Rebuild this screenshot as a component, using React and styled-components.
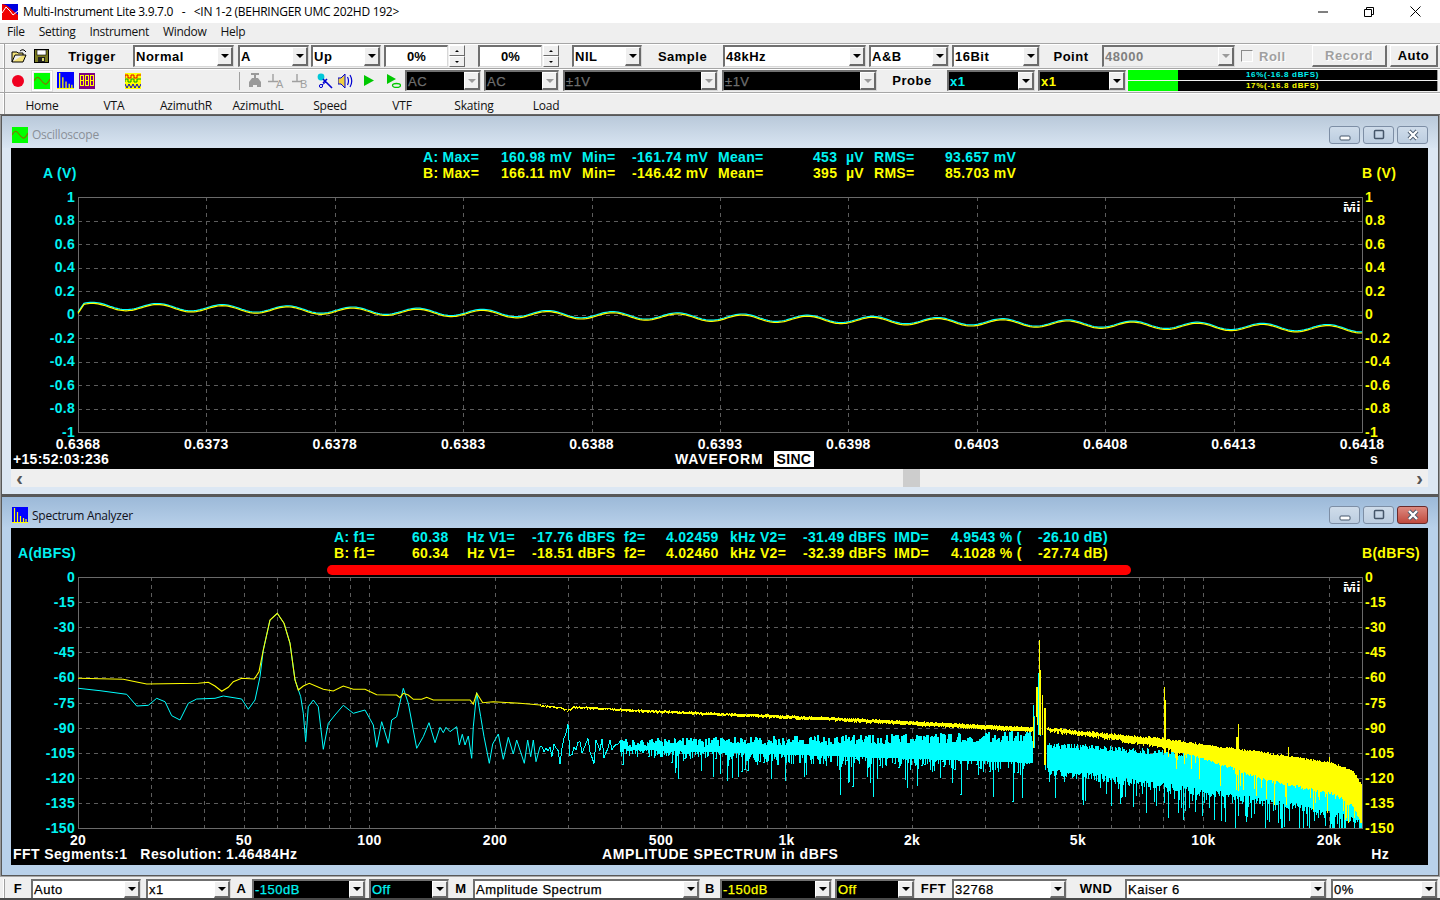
import React from "react";
import styled, { createGlobalStyle, css } from "styled-components";

const GlobalStyle = createGlobalStyle`
  html, body { margin: 0; padding: 0; background: #efefef; overflow: hidden; }
  body { font-family: "Liberation Sans", Arial, sans-serif; }
`;

const CYAN = "#00f2f2";
const YELLOW = "#ffff00";
const UI_FONT = `"Open Sans", "Noto Sans", sans-serif`;

// ---------- trace data ----------

const rng = (seed) => () => {
  seed = (seed + 0x6d2b79f5) | 0;
  let t = Math.imul(seed ^ (seed >>> 15), 1 | seed);
  t = (t + Math.imul(t ^ (t >>> 7), 61 | t)) ^ t;
  return ((t ^ (t >>> 14)) >>> 0) / 4294967296;
};

const interp = (knots, x) => {
  for (let i = 1; i < knots.length; i++) {
    if (x <= knots[i][0]) {
      const [x0, y0] = knots[i - 1];
      const [x1, y1] = knots[i];
      return y0 + ((y1 - y0) * (x - x0)) / (x1 - x0);
    }
  }
  return knots[knots.length - 1][1];
};

const scopeTrace = (offset) => {
  let d = "";
  for (let x = 78; x <= 1362; x += 2) {
    const base = 306.5 + (x - 93) * 0.018;
    let y = base - 3.4 * Math.cos(((x - 93) / 65) * 2 * Math.PI) + offset;
    if (x < 84) y += (84 - x) * 1.2;
    d += `${d ? "L" : "M"}${x} ${y.toFixed(1)}`;
  }
  return d;
};

// points read off the low end of the spectrum, as zoomed 3x from (60,600)
const fromZoom = (pts) =>
  pts.map(([x, y]) => `${(60 + x / 3).toFixed(1)} ${(600 + y / 3).toFixed(1)}`).join("L");

const yellowLow =
  "M78 678.3L" +
  fromZoom([
    [55, 235], [120, 236], [190, 238], [230, 246], [260, 252], [415, 250], [445, 247], [465, 258],
    [485, 274], [505, 262], [520, 245], [545, 235], [583, 237], [597, 215], [610, 150], [630, 60],
    [652, 40], [672, 70], [690, 130], [705, 240], [715, 270], [730, 258], [748, 250], [790, 268],
    [820, 273], [850, 258], [880, 268], [915, 268], [950, 284], [1010, 285], [1020, 293], [1030, 280],
    [1045, 285], [1060, 298], [1085, 298], [1100, 292], [1120, 300], [1180, 300], [1230, 300], [1240, 312],
    [1250, 280], [1268, 308], [1300, 305], [1380, 310], [1440, 315],
  ]);

const cyanLow =
  "M78 688.3L" +
  fromZoom([
    [55, 265], [120, 272], [200, 283], [230, 318], [265, 316], [290, 295], [315, 305], [335, 347],
    [360, 360], [385, 310], [410, 297], [465, 295], [490, 288], [545, 297], [565, 328], [585, 300],
    [600, 230], [610, 150], [630, 60], [652, 40], [672, 70], [690, 130], [705, 240], [722, 290],
    [730, 340], [737, 425], [745, 320], [760, 300], [775, 320], [790, 448], [805, 370], [825, 345],
    [850, 316], [880, 340], [915, 330], [940, 375], [950, 442], [965, 365], [985, 430], [995, 360],
    [1010, 350], [1030, 265], [1045, 310], [1070, 445], [1090, 410], [1107, 368], [1125, 428], [1140, 382],
    [1150, 398], [1158, 382], [1170, 395], [1190, 380], [1198, 435], [1207, 403], [1215, 435], [1225, 408],
    [1235, 475], [1240, 380], [1250, 278], [1262, 350], [1272, 410], [1288, 490], [1298, 432], [1315, 402],
    [1330, 478], [1345, 412], [1360, 462], [1370, 420], [1393, 490], [1403, 420], [1412, 470], [1420, 420],
    [1428, 485], [1440, 440],
  ]);

const buildCyanHigh = () => {
  const r = rng(42);
  let d = "M540 746";
  // sparse part is a line, further right the bins fill the pixels
  for (let x = 542; x < 620; x += 2) {
    const spike = r() < 0.12 ? r() * 18 : 0;
    const y = x > 564 && x < 570 ? 724 + r() * 12 : 748 + (r() - 0.5) * 22 + spike;
    d += `L${x} ${y.toFixed(1)}`;
  }
  let fill = "";
  for (let x = 620; x < 1033; x++) {
    const t = (x - 620) / 413;
    const up = 748 - r() * (9 + 8 * t);
    const spike = r() < 0.16 ? r() * (20 + 26 * t) : 0;
    const down = 748 + r() * (8 + 20 * t) + spike;
    d += `L${x} ${up.toFixed(1)}L${x} ${down.toFixed(1)}`;
    fill += `M${x} ${(748 - 7 * t).toFixed(1)}V${(749 + 14 * t).toFixed(1)}`;
  }
  d += fill;
  const manual = [[1033, 705, 748], [1034, 716, 748], [1038, 673, 735], [1039, 673, 735], [1040, 690, 736], [1042, 705, 735], [1045, 730, 770]];
  manual.forEach(([x, a, b]) => { d += `M${x} ${a}V${b}`; });
  const topK = [[1047, 742], [1100, 745], [1200, 752], [1330, 770], [1362, 800]];
  const botK = [[1047, 776], [1100, 782], [1200, 796], [1330, 816], [1362, 828]];
  for (let x = 1047; x <= 1361; x++) {
    const spike = r() < 0.3 ? r() * 30 : 0;
    const bottom = Math.min(828, interp(botK, x) - r() * 8 + spike);
    d += `M${x} ${(interp(topK, x) + r() * 6).toFixed(1)}V${bottom.toFixed(1)}`;
  }
  return d;
};

const buildYellowHigh = () => {
  const r = rng(7);
  const midK = [[540, 705], [560, 707], [567, 710], [574, 706], [621, 709], [723, 713], [824, 717], [925, 722], [1026, 727], [1033, 727]];
  let d = "";
  for (let x = 540; x < 1033; x++) {
    const th = 1 + ((x - 540) / 493) * 3;
    const y = interp(midK, x) + (r() - 0.5) * 1.2;
    d += `M${x} ${y.toFixed(1)}v${(th + r()).toFixed(1)}`;
  }
  const manual = [[1033, 717, 748], [1036, 687, 717], [1037, 687, 725], [1039, 640, 735], [1040, 670, 735], [1042, 695, 735], [1044, 708, 765], [1045, 708, 765], [1164, 687, 753], [1165, 700, 753], [1238, 724, 777], [1237, 737, 770], [1236, 737, 775], [1288, 747, 760], [1329, 757, 770]];
  manual.forEach(([x, a, b]) => { d += `M${x} ${a}V${b}`; });
  const topK = [[1047, 727], [1100, 732], [1160, 737], [1200, 743], [1267, 752], [1333, 762], [1353, 770], [1362, 785]];
  const botK = [[1047, 733], [1100, 739], [1160, 749], [1200, 759], [1267, 782], [1333, 795], [1353, 808], [1362, 828]];
  for (let x = 1047; x <= 1361; x++) {
    const spike = r() < 0.16 && x > 1160 ? r() * 24 : 0;
    const bottom = Math.min(828, interp(botK, x) - r() * 3 + spike);
    d += `M${x} ${(interp(topK, x) + r() * 2).toFixed(1)}V${bottom.toFixed(1)}`;
  }
  return d;
};

const freqX = (f) => 78 + 417 * Math.log10(f / 20);
const freqGrid = [30, 40, 50, 60, 70, 80, 90, 100, 200, 300, 400, 500, 600, 700, 800, 900, 1000, 2000, 3000, 4000, 5000, 6000, 7000, 8000, 9000, 10000, 20000];
const freqLabels = [["20", 20], ["50", 50], ["100", 100], ["200", 200], ["500", 500], ["1k", 1000], ["2k", 2000], ["5k", 5000], ["10k", 10000], ["20k", 20000]];
const timeLabels = ["0.6368", "0.6373", "0.6378", "0.6383", "0.6388", "0.6393", "0.6398", "0.6403", "0.6408", "0.6413", "0.6418"];
const voltLabels = ["1", "0.8", "0.6", "0.4", "0.2", "0", "-0.2", "-0.4", "-0.6", "-0.8", "-1"];
const dbLabels = ["0", "-15", "-30", "-45", "-60", "-75", "-90", "-105", "-120", "-135", "-150"];

// ---------- page parts ----------

const place = css`
  flex-shrink: 0;
  margin-left: ${(p) => p.$ml || 0}px;
  ${(p) => p.$w && `width: ${p.$w}px;`}
`;

const Page = styled.div`
  width: 1440px;
  height: 900px;
  display: flex;
  flex-direction: column;
  overflow: hidden;
  background: #efefef;
`;

const TitleBar = styled.div`
  height: 23px;
  background: #fff;
  display: flex;
  align-items: center;
  padding-left: 2px;
  font: 12px ${UI_FONT};
  color: #000;
  white-space: pre;
  flex-shrink: 0;
`;

const TitleText = styled.span`
  margin-left: 5px;
  letter-spacing: -0.28px;
  flex: 1;
`;

const CaptionBtn = styled.div`
  width: 46px;
  height: 23px;
  display: flex;
  align-items: center;
  justify-content: center;
`;

const CaptionGroup = styled.div`
  display: flex;
  padding-right: 2px;
`;

const MenuBar = styled.div`
  height: 20px;
  box-sizing: border-box;
  padding: 0 0 3px 7px;
  display: flex;
  align-items: center;
  gap: 14px;
  font: 12px ${UI_FONT};
  letter-spacing: -0.3px;
  color: #111;
  flex-shrink: 0;
`;

const ToolRow = styled.div`
  height: ${(p) => p.$h}px;
  box-sizing: border-box;
  display: flex;
  align-items: center;
  border-top: 1px solid #a6a6a6;
  box-shadow: inset 0 1px 0 #fff;
  flex-shrink: 0;
`;

const Grip = styled.div`
  box-sizing: border-box;
  flex-shrink: 0;
  width: 2px;
  height: 100%;
  margin-left: 3px;
  background: #fff;
  border-right: 1px solid #a0a0a0;
`;

const Label = styled.div`
  ${place}
  text-align: center;
  font: bold 13px "Liberation Sans", sans-serif;
  letter-spacing: 0.5px;
  color: #000;
`;

const BarLabel = styled(Label)`
  line-height: 20px;
`;

const Combo = styled.div`
  ${place}
  height: ${(p) => p.$h || 22}px;
  box-sizing: border-box;
  display: flex;
  border-style: solid;
  border-width: 2px 1px 1px 2px;
  border-color: #707070 #d8d8d8 #d8d8d8 #707070;
  background: ${(p) => (p.$dark ? "#000" : p.$off ? "#efefef" : "#fff")};
`;

const ComboText = styled.div`
  flex: 1;
  overflow: hidden;
  white-space: pre;
  padding-left: 1px;
  font: ${(p) => (p.$thin ? "normal" : "bold")} 13px "Liberation Sans", sans-serif;
  ${(p) => p.$thin && "-webkit-text-stroke: 0.25px;"}
  letter-spacing: 0.5px;
  display: flex;
  align-items: center;
  color: ${(p) => p.$color || "#000"};
`;

const ArrowBtn = styled.div`
  width: 16px;
  box-sizing: border-box;
  background: #efefef;
  border-style: solid;
  border-width: 1px 2px 2px 1px;
  border-color: #fff #6a6a6a #6a6a6a #fff;
  display: flex;
  align-items: center;
  justify-content: center;
  &::after {
    content: "";
    border-left: 4px solid transparent;
    border-right: 4px solid transparent;
    border-top: 4px solid ${(p) => (p.$off ? "#9a9a9a" : "#000")};
  }
`;

const EditBox = styled(Combo)`
  justify-content: center;
  align-items: center;
  font: bold 13px "Liberation Sans", sans-serif;
`;

const Spinner = styled.div`
  ${place}
  height: 22px;
  display: flex;
  flex-direction: column;
`;

const SpinPart = styled.div`
  flex: 1;
  box-sizing: border-box;
  background: #efefef;
  border-style: solid;
  border-width: 1px;
  border-color: #fff #6a6a6a #6a6a6a #fff;
  display: flex;
  align-items: center;
  justify-content: center;
  &::after {
    content: "";
    border-left: 2px solid transparent;
    border-right: 2px solid transparent;
    ${(p) => (p.$up ? "border-bottom: 2px solid #000;" : "border-top: 2px solid #000;")}
  }
`;

const RollBox = styled.div`
  ${place}
  display: flex;
  align-items: center;
  gap: 6px;
  font: bold 13px "Liberation Sans", sans-serif;
  letter-spacing: 0.5px;
  color: #a0a0a0;
  text-shadow: 1px 1px 0 #fff;
`;

const CheckBox = styled.div`
  width: 12px;
  height: 12px;
  box-sizing: border-box;
  background: #efefef;
  border-style: solid;
  border-width: 1px;
  border-color: #8a8a8a #fff #fff #8a8a8a;
`;

const RaisedBtn = styled.div`
  ${place}
  height: 22px;
  box-sizing: border-box;
  background: #efefef;
  border-style: solid;
  border-width: 1px 2px 2px 1px;
  border-color: #fff #707070 #707070 #fff;
  display: flex;
  align-items: center;
  justify-content: center;
  font: bold 13px "Liberation Sans", sans-serif;
  letter-spacing: 0.5px;
  color: ${(p) => (p.$off ? "#a0a0a0" : "#000")};
  ${(p) => p.$off && "text-shadow: 1px 1px 0 #fff;"}
`;

const IconSlot = styled.div`
  ${place}
  height: 18px;
  display: flex;
  align-items: center;
  justify-content: center;
  ${(p) =>
    p.$pressed &&
    `outline: 1px solid #fff; box-shadow: 0 0 0 2px #dcdcdc;`}
`;

const Separator = styled.div`
  ${place}
  width: 1px;
  height: 18px;
  background: #a0a0a0;
`;

const MeterStack = styled.div`
  ${place}
  display: flex;
  flex-direction: column;
  gap: 1px;
`;

const MeterBar = styled.div`
  height: 10px;
  background: #000;
  position: relative;
  border-right: 1px solid #999;
`;

const MeterFill = styled.div`
  height: 100%;
  background: #00ff00;
`;

const MeterText = styled.div`
  position: absolute;
  left: 0;
  right: 0;
  top: 0;
  text-align: center;
  font: bold 8px/10px "Liberation Sans", sans-serif;
  letter-spacing: 0.7px;
  color: ${(p) => p.$color};
`;

const TabRow = styled(ToolRow)`
  border-bottom: 1px solid #666;
`;

const Tab = styled.div`
  width: 72px;
  padding-top: 4px;
  margin-left: ${(p) => p.$ml || 0}px;
  text-align: center;
  font: 12px ${UI_FONT};
  letter-spacing: -0.2px;
  color: #111;
`;

const MdiArea = styled.div`
  height: 761px;
  flex-shrink: 0;
  box-sizing: border-box;
  padding: 1px 2px 1px;
  background: #585858;
  display: flex;
  flex-direction: column;
  gap: 3px;
  border-left: 1px solid #9a9a9a;
  border-right: 1px solid #9a9a9a;
`;

const Win = styled.section`
  height: 378px;
  flex-shrink: 0;
  display: flex;
  flex-direction: column;
  box-sizing: border-box;
  margin-left: -1px;
  margin-right: -1px;
  padding: 0 10px 0 9px;
  background: ${(p) => (p.$active ? "#b9d1ea" : "#dce7f3")};
  border-radius: 3px 3px 0 0;
`;

const WinTitle = styled.header`
  height: ${(p) => p.$h}px;
  box-sizing: border-box;
  margin: 0 -10px 0 -9px;
  padding: 5px 10px 0 10px;
  display: flex;
  align-items: center;
  flex-shrink: 0;
  background: ${(p) =>
    p.$active ? "linear-gradient(#9cb9d8, #b9d1ea)" : "linear-gradient(#b9c9da, #d9e5f2)"};
`;

const WinName = styled.span`
  margin-left: 4px;
  flex: 1;
  font: 12px ${UI_FONT};
  letter-spacing: -0.25px;
  color: ${(p) => (p.$active ? "#10101a" : "#8a9098")};
`;

const WinButtons = styled.div`
  display: flex;
  gap: 3px;
`;

const WinButton = styled.div`
  width: 31px;
  height: 18px;
  box-sizing: border-box;
  border: 1px solid ${(p) => (p.$close ? "#6b2a2a" : "#7d8ea5")};
  border-radius: 3px;
  background: ${(p) =>
    p.$close ? "linear-gradient(#dd8a80, #c04a3e)" : "linear-gradient(#cfdcea, #bccde0)"};
  display: flex;
  align-items: center;
  justify-content: center;
`;

const Client = styled.div`
  height: ${(p) => p.$h}px;
  flex-shrink: 0;
  background: #000;
  display: flex;
  flex-direction: column;
  position: relative;
  font: bold 14px "Liberation Sans", sans-serif;
  letter-spacing: 0.3px;
`;

const PlotHead = styled.div`
  display: grid;
  grid-template-columns: ${(p) => p.$cols};
  padding-top: 1px;
  height: 32px;
  flex-shrink: 0;
`;

const AxisName = styled.div`
  align-self: end;
  line-height: 16px;
  padding-left: ${(p) => p.$pad || 0}px;
  color: ${(p) => p.$color};
`;

const Readout = styled.div`
  display: grid;
  grid-template-columns: ${(p) => p.$cols};
  grid-auto-rows: 16px;
  line-height: 16px;
  white-space: pre;
`;

const Cell = styled.span`
  color: ${(p) => p.$color};
`;

const PlotSvg = styled.svg`
  display: block;
  flex-shrink: 0;
  margin-bottom: ${(p) => p.$overlap || 0}px;
`;

const PlotFoot = styled.div`
  flex: 1;
  display: grid;
  grid-template-columns: ${(p) => p.$cols};
  color: #fff;
  line-height: 16px;
  white-space: pre;
  padding-left: 2px;
`;

const WideCaption = styled.span`
  letter-spacing: ${(p) => p.$gap}px;
`;

const SincTag = styled.span`
  background: #fff;
  color: #000;
  letter-spacing: 0.3px;
  padding: 0 3px;
  margin-left: 10px;
`;

const FootUnit = styled.span`
  padding-right: ${(p) => p.$pad}px;
`;

const ScrollBar = styled.div`
  height: 18px;
  flex-shrink: 0;
  background: #efefef;
  display: flex;
  align-items: center;
  justify-content: space-between;
`;

const ScrollArrow = styled.div`
  width: 17px;
  text-align: center;
  font: bold 20px/16px "Liberation Sans", sans-serif;
  color: #555;
`;

const ScrollTrack = styled.div`
  flex: 1;
  height: 18px;
  padding-left: 875px;
`;

const ScrollThumb = styled.div`
  width: 17px;
  height: 18px;
  background: #cdcdcd;
`;

const RedMark = styled.div`
  position: absolute;
  left: 316px;
  top: 37px;
  width: 804px;
  height: 10px;
  border-radius: 5px;
  background: #ff0000;
`;

const BottomBar = styled.div`
  height: 24px;
  box-sizing: border-box;
  display: flex;
  align-items: flex-start;
  padding-top: 2px;
  border-top: 1px solid #a6a6a6;
  border-bottom: 2px solid #4a4a4a;
  flex-shrink: 0;
  overflow: hidden;
`;

// ---------- icons ----------

const AppIcon = () => (
  <svg width="16" height="16" viewBox="0 0 16 16">
    <rect width="16" height="16" fill="#f00000" />
    <path d="M0 0H16V11L8 4 4 1Z" fill="#0000e0" />
    <path d="M0 9L4 3 8 7 11 11 16 7" fill="none" stroke="#fff" strokeWidth="1" />
  </svg>
);

const FolderIcon = () => (
  <svg width="16" height="14" viewBox="0 0 16 14">
    <path d="M1 13V3H6L7 4H12V6H4L1 13H12L15 6H12" fill="#f4e27a" stroke="#000" strokeWidth="1" />
    <path d="M9 2Q11 0 13 1L15 3" fill="none" stroke="#000" />
  </svg>
);

const SaveIcon = () => (
  <svg width="15" height="14" viewBox="0 0 15 14">
    <rect x="0.5" y="0.5" width="14" height="13" fill="#7a7a20" stroke="#000" />
    <rect x="3" y="1" width="9" height="5" fill="#fff" stroke="#000" strokeWidth=".6" />
    <rect x="4" y="8" width="7" height="5" fill="#222" />
    <rect x="8" y="9" width="2" height="3" fill="#d8d870" />
  </svg>
);

const RecordIcon = () => (
  <svg width="12" height="12" viewBox="0 0 12 12">
    <circle cx="6" cy="6" r="6" fill="#f00020" />
  </svg>
);

const ScopeIcon = ({ size = 16 }) => (
  <svg width={size} height={size} viewBox="0 0 16 16">
    <rect width="16" height="16" fill="#00ff00" />
    <path d="M0 8Q3 2 6 6T11 11Q13 12 16 6" fill="none" stroke="#7a7a00" strokeWidth="1.2" />
  </svg>
);

const SpectrumIcon = ({ size = 16 }) => (
  <svg width={size} height={size} viewBox="0 0 16 16">
    <rect width="16" height="16" fill="#0000ff" />
    <path d="M2.5 15V1M5.5 15V5M8.5 15V9M11.5 15V11M14 15V12" stroke="#ffff00" strokeWidth="1.2" />
    <path d="M0 15.5H16" stroke="#ffff00" />
  </svg>
);

const MeterIcon = () => (
  <svg width="16" height="16" viewBox="0 0 16 16">
    <rect width="16" height="16" fill="#800080" />
    <g fill="none" stroke="#ffff00" strokeWidth="1">
      <rect x="1.5" y="2.5" width="3" height="5" />
      <rect x="1.5" y="7.5" width="3" height="5" />
      <rect x="6.5" y="2.5" width="3" height="5" />
      <rect x="6.5" y="7.5" width="3" height="5" />
      <rect x="11.5" y="2.5" width="3" height="5" />
      <rect x="11.5" y="7.5" width="3" height="5" />
    </g>
  </svg>
);

const LogicIcon = () => (
  <svg width="16" height="16" viewBox="0 0 16 16">
    <rect width="16" height="16" fill="#ffff00" />
    <path d="M0 5V2H3V5H6V2H9V5H12V2H16" fill="none" stroke="#e00000" />
    <path d="M0 9V6H3V9H6V6H9V9H12V6H16" fill="none" stroke="#00a000" />
    <path d="M0 11L2 15 4 11 6 15 8 11 10 15 12 11 14 15 16 11" fill="none" stroke="#0000d0" />
  </svg>
);

const TonearmIcon = () => (
  <svg width="14" height="16" viewBox="0 0 14 16">
    <path d="M3 1H11M7 1V5" stroke="#9a9a9a" strokeWidth="2" fill="none" />
    <path d="M1 14V9L4 5H10L13 9V14H9V12H5V14Z" fill="#9a9a9a" />
  </svg>
);

const GroundIcon = ({ letter }) => (
  <svg width="17" height="16" viewBox="0 0 17 16">
    <path d="M0 8.5H10M5 1V8" stroke="#a0a0a0" strokeWidth="1.4" fill="none" />
    <text x="8" y="15" fontSize="11" fontFamily="Liberation Sans" fill="#a0a0a0">{letter}</text>
  </svg>
);

const MicIcon = () => (
  <svg width="16" height="16" viewBox="0 0 16 16">
    <circle cx="4" cy="4" r="3.4" fill="#00c8d8" />
    <path d="M6 6L15 15M10 6L6 10" stroke="#0000d0" strokeWidth="1.6" />
    <circle cx="4" cy="13" r="1.6" fill="none" stroke="#0000d0" />
    <path d="M5 12L9 9" stroke="#0000d0" />
  </svg>
);

const SpeakerIcon = () => (
  <svg width="16" height="16" viewBox="0 0 16 16">
    <path d="M0 5H3L7 1V15L3 11H0Z" fill="#f0d040" stroke="#0000d0" />
    <path d="M9.5 4Q11.5 8 9.5 12M12 2Q15.5 8 12 14" fill="none" stroke="#0000d0" strokeWidth="1.2" />
  </svg>
);

const PlayIcon = () => (
  <svg width="12" height="11" viewBox="0 0 12 11">
    <path d="M1 0L11 5.5 1 11Z" fill="#00c800" />
  </svg>
);

const PlayOnceIcon = () => (
  <svg width="14" height="14" viewBox="0 0 14 14">
    <path d="M0 0L9 5 0 10Z" fill="#00c800" />
    <ellipse cx="9.5" cy="11.5" rx="4" ry="2" fill="none" stroke="#00c800" strokeWidth="1.3" />
  </svg>
);

const MinIcon = () => (
  <svg width="10" height="10" viewBox="0 0 10 10"><path d="M0 5H10" stroke="#000" /></svg>
);
const RestoreIcon = () => (
  <svg width="10" height="10" viewBox="0 0 10 10">
    <path d="M0.5 2.5H7.5V9.5H0.5ZM2.5 2.5V0.5H9.5V7.5H7.5" fill="none" stroke="#000" />
  </svg>
);
const CloseIcon = () => (
  <svg width="11" height="11" viewBox="0 0 11 11"><path d="M0.5 0.5L10.5 10.5M10.5 0.5L0.5 10.5" stroke="#000" /></svg>
);

const WinGlyph = ({ kind }) => (
  <svg width="14" height="12" viewBox="0 0 14 12">
    {kind === "min" && <rect x="2" y="7" width="10" height="4" rx="1" fill="#fff" stroke="#45566a" />}
    {kind === "max" && <rect x="2.5" y="1.5" width="9" height="8" rx="1" fill="none" stroke="#45566a" strokeWidth="1.5" />}
    {kind === "close" && (
      <>
        <path d="M3 2L11 10M11 2L3 10" stroke="#45566a" strokeWidth="4" />
        <path d="M3 2L11 10M11 2L3 10" stroke="#fff" strokeWidth="2.4" />
      </>
    )}
  </svg>
);

const MiLogo = ({ y }) => (
  <g>
    <text x="1343" y={y + 12} fontSize="14" fontWeight="bold" fill="#fff" textLength="18" lengthAdjust="spacingAndGlyphs">
      Mi
    </text>
    <path d={`M1342 ${y + 3.5}H1362M1342 ${y + 6.5}H1362`} stroke="#000" strokeWidth="1" />
  </g>
);

// ---------- plots ----------

const GridFrame = ({ left, right, top, bottom, xs, ys }) => (
  <g shapeRendering="crispEdges">
    <g stroke="#5c5c5c" strokeDasharray="4 4" fill="none">
      {xs.map((x) => <path key={x} d={`M${Math.round(x)} ${top}V${bottom}`} />)}
      {ys.map((y) => <path key={y} d={`M${left} ${Math.round(y)}H${right}`} />)}
    </g>
    <rect x={left} y={top} width={right - left} height={bottom - top} fill="none" stroke="#6a6a6a" />
  </g>
);

const ScopePlot = () => {
  const xs = timeLabels.map((_, i) => 78 + i * 128.4);
  const ys = voltLabels.map((_, i) => 197 + i * 23.5);
  return (
    <PlotSvg width="1417" height="270" viewBox="11 181 1417 270">
      <GridFrame left={78} right={1362} top={197} bottom={432} xs={xs.slice(1, -1)} ys={ys.slice(1, -1)} />
      <path d={scopeTrace(-0.8)} fill="none" stroke="#00ffff" strokeWidth="1.2" />
      <path d={scopeTrace(0.3)} fill="none" stroke={YELLOW} strokeWidth="1.2" />
      <MiLogo y={200} />
      {voltLabels.map((t, i) => (
        <g key={t}>
          <text x="75" y={ys[i] + 4.5} textAnchor="end" fill={CYAN}>{t}</text>
          <text x="1365" y={ys[i] + 4.5} fill={YELLOW}>{t}</text>
        </g>
      ))}
      {timeLabels.map((t, i) => (
        <text key={t} x={xs[i]} y="449" textAnchor="middle" fill="#fff">{t}</text>
      ))}
    </PlotSvg>
  );
};

const SpectrumPlot = () => {
  const ys = dbLabels.map((_, i) => 577 + i * 25.1);
  return (
    <PlotSvg width="1417" height="289" viewBox="11 561 1417 289" $overlap={-4}>
      <GridFrame left={78} right={1362} top={577} bottom={828} xs={freqGrid.map(freqX)} ys={ys.slice(1, -1)} />
      <path d={cyanLow} fill="none" stroke="#00ffff" strokeWidth="1" />
      <path d={buildCyanHigh()} fill="none" stroke="#00ffff" strokeWidth="1" shapeRendering="crispEdges" />
      <path d={yellowLow} fill="none" stroke={YELLOW} strokeWidth="1.1" />
      <path d={buildYellowHigh()} fill="none" stroke={YELLOW} strokeWidth="1" shapeRendering="crispEdges" />
      <MiLogo y={580} />
      {dbLabels.map((t, i) => (
        <g key={t}>
          <text x="75" y={ys[i] + 5} textAnchor="end" fill={CYAN}>{t}</text>
          <text x="1365" y={ys[i] + 5} fill={YELLOW}>{t}</text>
        </g>
      ))}
      {freqLabels.map(([t, f]) => (
        <text key={t} x={freqX(f)} y="845" textAnchor="middle" fill="#fff">{t}</text>
      ))}
    </PlotSvg>
  );
};

const scopeCols = "78px 81px 50px 86px 95px 33px 28px 71px auto";
const scopeRows = [
  { color: CYAN, cells: ["A: Max=", "160.98 mV", "Min=", "-161.74 mV", "Mean=", "453", "µV", "RMS=", "93.657 mV"] },
  { color: YELLOW, cells: ["B: Max=", "166.11 mV", "Min=", "-146.42 mV", "Mean=", "395", "µV", "RMS=", "85.703 mV"] },
];

const spectrumCols = "78px 55px 65px 92px 42px 64px 73px 91px 57px 87px auto";
const spectrumRows = [
  { color: CYAN, cells: ["A: f1=", "60.38", "Hz V1=", "-17.76 dBFS", "f2=", "4.02459", "kHz V2=", "-31.49 dBFS", "IMD=", "4.9543 % (", "-26.10 dB)"] },
  { color: YELLOW, cells: ["B: f1=", "60.34", "Hz V1=", "-18.51 dBFS", "f2=", "4.02460", "kHz V2=", "-32.39 dBFS", "IMD=", "4.1028 % (", "-27.74 dB)"] },
];

const ReadoutTable = ({ cols, rows }) => (
  <Readout $cols={cols}>
    {rows.map((row) =>
      row.cells.map((c, i) => (
        <Cell key={`${row.color}${i}`} $color={row.color}>{c}</Cell>
      ))
    )}
  </Readout>
);

const Drop = ({ w, ml, h, dark, off, arrowOff, thin, color, children }) => (
  <Combo $w={w} $ml={ml} $h={h} $dark={dark} $off={off}>
    <ComboText $color={color} $thin={thin}>{children}</ComboText>
    <ArrowBtn $off={off || arrowOff} />
  </Combo>
);

const Spin = ({ ml }) => (
  <Spinner $w={16} $ml={ml}>
    <SpinPart $up />
    <SpinPart />
  </Spinner>
);

const WinControls = ({ active }) => (
  <WinButtons>
    <WinButton><WinGlyph kind="min" /></WinButton>
    <WinButton><WinGlyph kind="max" /></WinButton>
    <WinButton $close={active}><WinGlyph kind="close" /></WinButton>
  </WinButtons>
);

const menus = ["File", "Setting", "Instrument", "Window", "Help"];
const tabs = ["Home", "VTA", "AzimuthR", "AzimuthL", "Speed", "VTF", "Skating", "Load"];

export default function App() {
  return (
    <Page>
      <GlobalStyle />
      <TitleBar>
        <AppIcon />
        <TitleText>{"Multi-Instrument Lite 3.9.7.0   -   <IN 1-2 (BEHRINGER UMC 202HD 192>"}</TitleText>
        <CaptionGroup>
          <CaptionBtn><MinIcon /></CaptionBtn>
          <CaptionBtn><RestoreIcon /></CaptionBtn>
          <CaptionBtn><CloseIcon /></CaptionBtn>
        </CaptionGroup>
      </TitleBar>

      <MenuBar>
        {menus.map((m) => <span key={m}>{m}</span>)}
      </MenuBar>

      <ToolRow $h={25}>
        <Grip />
        <IconSlot $ml={6} $w={16}><FolderIcon /></IconSlot>
        <IconSlot $ml={7} $w={15}><SaveIcon /></IconSlot>
        <Label $ml={10} $w={66}>Trigger</Label>
        <Drop ml={8} w={101}>Normal</Drop>
        <Drop ml={4} w={71}>A</Drop>
        <Drop ml={2} w={70}>Up</Drop>
        <EditBox $ml={3} $w={64}>0%</EditBox>
        <Spin ml={1} />
        <EditBox $ml={13} $w={64}>0%</EditBox>
        <Spin ml={1} />
        <Drop ml={13} w={70}>NIL</Drop>
        <Label $w={81}>Sample</Label>
        <Drop w={143}>48kHz</Drop>
        <Drop ml={3} w={80}>A&amp;B</Drop>
        <Drop ml={3} w={88}>16Bit</Drop>
        <Label $w={62}>Point</Label>
        <Drop w={133} off color="#808080">48000</Drop>
        <RollBox $ml={6} $w={71}><CheckBox />Roll</RollBox>
        <RaisedBtn $w={75} $off>Record</RaisedBtn>
        <RaisedBtn $ml={3} $w={48}>Auto</RaisedBtn>
      </ToolRow>

      <ToolRow $h={24}>
        <Grip />
        <IconSlot $ml={7} $w={12}><RecordIcon /></IconSlot>
        <IconSlot $ml={9} $w={18} $pressed><ScopeIcon /></IconSlot>
        <IconSlot $ml={6} $w={17}><SpectrumIcon size={17} /></IconSlot>
        <IconSlot $ml={5} $w={16}><MeterIcon /></IconSlot>
        <IconSlot $ml={30} $w={16}><LogicIcon /></IconSlot>
        <Separator $ml={98} />
        <IconSlot $ml={7} $w={16}><TonearmIcon /></IconSlot>
        <IconSlot $ml={5} $w={17}><GroundIcon letter="A" /></IconSlot>
        <IconSlot $ml={7} $w={17}><GroundIcon letter="B" /></IconSlot>
        <IconSlot $ml={8} $w={16}><MicIcon /></IconSlot>
        <IconSlot $ml={5} $w={16}><SpeakerIcon /></IconSlot>
        <IconSlot $ml={9} $w={12}><PlayIcon /></IconSlot>
        <IconSlot $ml={12} $w={14}><PlayOnceIcon /></IconSlot>
        <Drop ml={4} w={76} h={21} dark arrowOff thin color="#6e6e6e">AC</Drop>
        <Drop ml={3} w={75} h={21} dark arrowOff thin color="#6e6e6e">AC</Drop>
        <Drop ml={4} w={155} h={21} dark arrowOff thin color="#6e6e6e">±1V</Drop>
        <Drop ml={4} w={155} h={21} dark arrowOff thin color="#6e6e6e">±1V</Drop>
        <Label $w={70}>Probe</Label>
        <Drop w={88} h={21} dark color={CYAN}>x1</Drop>
        <Drop ml={3} w={88} h={21} dark color={YELLOW}>x1</Drop>
        <MeterStack $ml={2} $w={310}>
          <MeterBar>
            <MeterFill style={{ width: 50 }} />
            <MeterText $color={CYAN}>16%(-16.8 dBFS)</MeterText>
          </MeterBar>
          <MeterBar>
            <MeterFill style={{ width: 50 }} />
            <MeterText $color={YELLOW}>17%(-16.8 dBFS)</MeterText>
          </MeterBar>
        </MeterStack>
      </ToolRow>

      <TabRow $h={23}>
        <Grip />
        {tabs.map((t, i) => <Tab key={t} $ml={i === 0 ? 1 : 0}>{t}</Tab>)}
      </TabRow>

      <MdiArea>
        <Win>
          <WinTitle $h={32}>
            <ScopeIcon />
            <WinName>Oscilloscope</WinName>
            <WinControls />
          </WinTitle>
          <Client $h={321}>
            <PlotHead $cols="412px 939px auto">
              <AxisName $pad={32} $color={CYAN}>A (V)</AxisName>
              <ReadoutTable cols={scopeCols} rows={scopeRows} />
              <AxisName $color={YELLOW}>B (V)</AxisName>
            </PlotHead>
            <ScopePlot />
            <PlotFoot $cols="662px auto 1fr auto">
              <span>+15:52:03:236</span>
              <span><WideCaption $gap={0.9}>WAVEFORM</WideCaption><SincTag>SINC</SincTag></span>
              <span />
              <FootUnit $pad={50}>s</FootUnit>
            </PlotFoot>
          </Client>
          <ScrollBar>
            <ScrollArrow>‹</ScrollArrow>
            <ScrollTrack><ScrollThumb /></ScrollTrack>
            <ScrollArrow>›</ScrollArrow>
          </ScrollBar>
        </Win>

        <Win $active>
          <WinTitle $h={31} $active>
            <SpectrumIcon />
            <WinName $active>Spectrum Analyzer</WinName>
            <WinControls active />
          </WinTitle>
          <Client $h={337}>
            <PlotHead $cols="323px 1028px auto">
              <AxisName $pad={7} $color={CYAN}>A(dBFS)</AxisName>
              <ReadoutTable cols={spectrumCols} rows={spectrumRows} />
              <AxisName $color={YELLOW}>B(dBFS)</AxisName>
            </PlotHead>
            <SpectrumPlot />
            <PlotFoot $cols="589px auto 1fr auto">
              <WideCaption $gap={0.4}>{"FFT Segments:1   Resolution: 1.46484Hz"}</WideCaption>
              <WideCaption $gap={0.6}>AMPLITUDE SPECTRUM in dBFS</WideCaption>
              <span />
              <FootUnit $pad={39}>Hz</FootUnit>
            </PlotFoot>
            <RedMark />
          </Client>
        </Win>
      </MdiArea>

      <BottomBar>
        <Grip />
        <BarLabel $w={26}>F</BarLabel>
        <Drop w={110} h={20} thin>Auto</Drop>
        <Drop ml={5} w={85} h={20} thin>x1</Drop>
        <BarLabel $w={21}>A</BarLabel>
        <Drop w={114} h={20} dark thin color={CYAN}>-150dB</Drop>
        <Drop ml={3} w={80} h={20} dark thin color={CYAN}>Off</Drop>
        <BarLabel $w={24}>M</BarLabel>
        <Drop w={227} h={20} thin>Amplitude Spectrum</Drop>
        <BarLabel $w={20}>B</BarLabel>
        <Drop w={112} h={20} dark thin color={YELLOW}>-150dB</Drop>
        <Drop ml={3} w={80} h={20} dark thin color={YELLOW}>Off</Drop>
        <BarLabel $w={37}>FFT</BarLabel>
        <Drop w={115} h={20} thin>32768</Drop>
        <BarLabel $w={58}>WND</BarLabel>
        <Drop w={202} h={20} thin>Kaiser 6</Drop>
        <Drop ml={4} w={107} h={20} thin>0%</Drop>
      </BottomBar>
    </Page>
  );
}
